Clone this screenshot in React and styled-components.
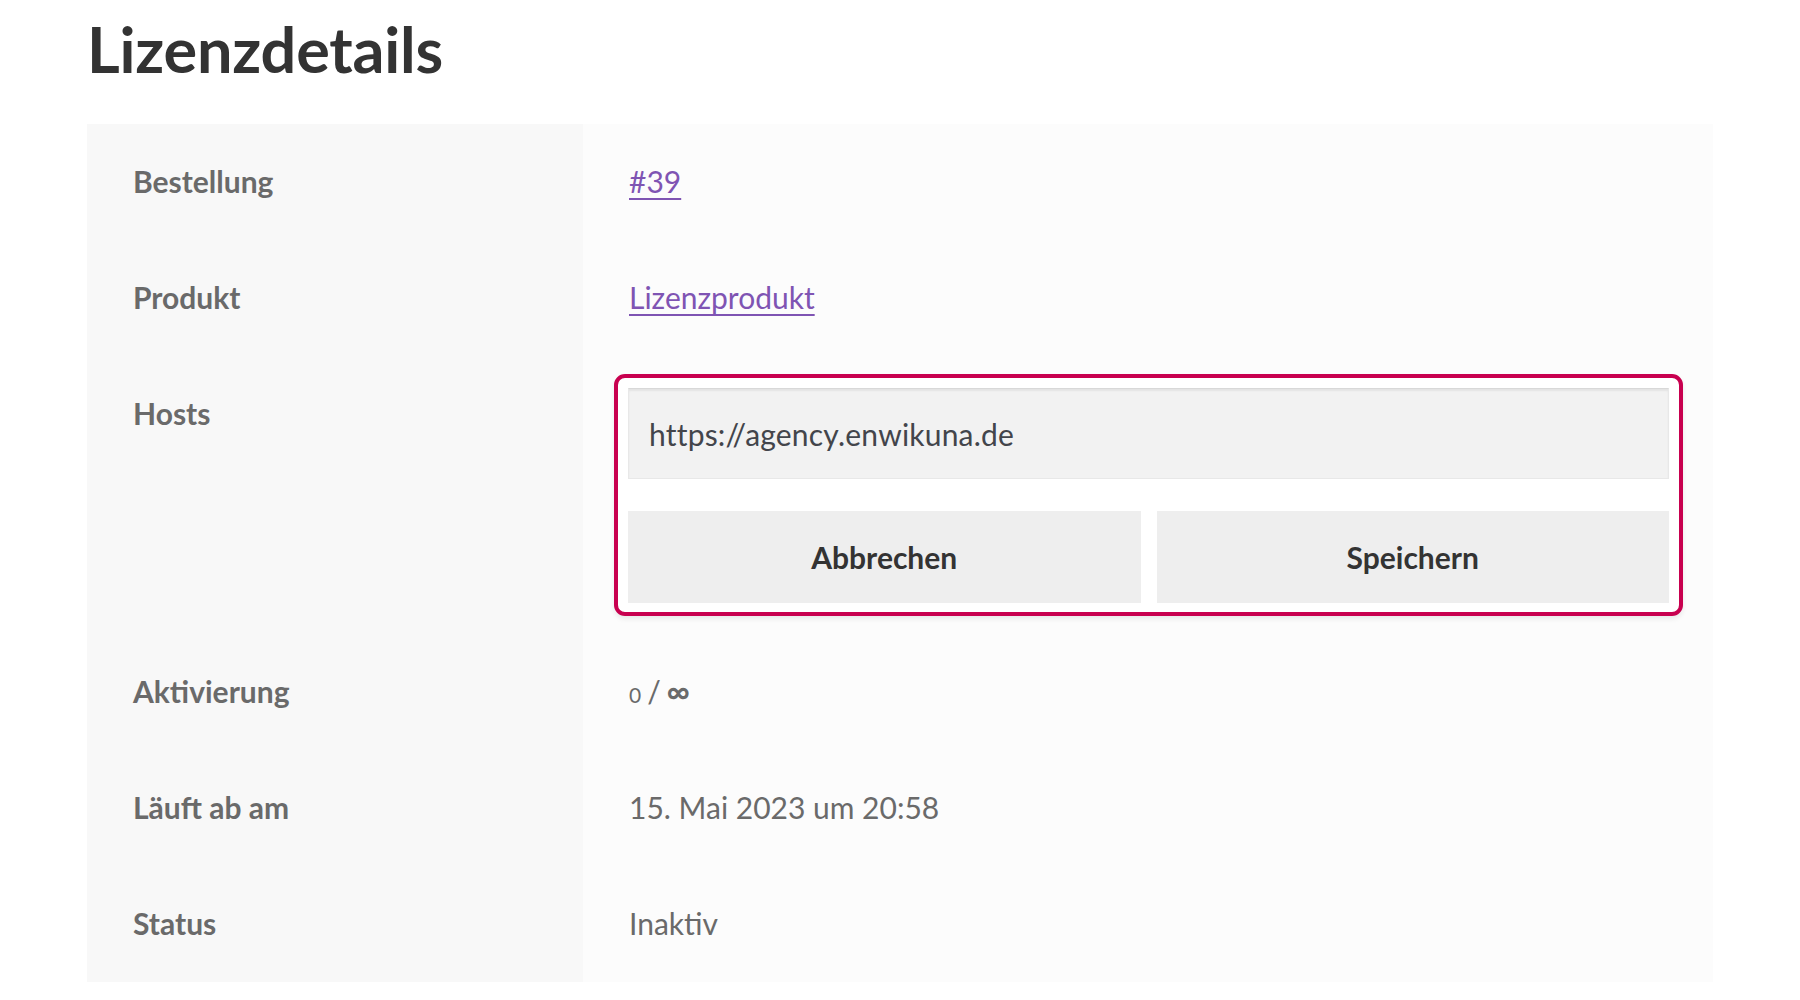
import React from "react";
import styled, { createGlobalStyle } from "styled-components";

const GlobalStyle = createGlobalStyle`
  html, body {
    margin: 0;
    padding: 0;
    background: #ffffff;
    font-family: "Lato", "Open Sans", sans-serif;
  }
`;

const Page = styled.div`
  padding: 12px 87px 0;
`;

const Title = styled.h1`
  margin: 0 0 39px;
  font-size: 63px;
  line-height: 73px;
  font-weight: 700;
  color: #333333;
  letter-spacing: -0.2px;
`;

const Table = styled.div`
  display: grid;
  grid-template-columns: 496px 1fr;
`;

const Label = styled.div`
  background: #f8f8f8;
  padding: 30px 46px 30px;
  font-size: 30px;
  line-height: 55px;
  font-weight: 700;
  color: #6a6a6a;
`;

const Value = styled.div`
  background: #fcfcfc;
  padding: ${({ $editing }) => ($editing ? "18px 30px 18px 31px" : "30px 46px 31px")};
  font-size: 30px;
  line-height: 55px;
  color: #6a6a6a;
`;

const Link = styled.a`
  color: #7f54b3;
  text-decoration: underline;
  text-underline-offset: 5px;
  text-decoration-thickness: 2px;
`;

const EditBox = styled.div`
  border: 4px solid #c8004f;
  border-radius: 11px;
  padding: 10px 10px 9px;
  background: #ffffff;
  box-shadow: 0 3px 5px rgba(0, 0, 0, 0.08);
  display: flex;
  flex-direction: column;
  gap: 32px;
`;

const HostInput = styled.input`
  box-sizing: border-box;
  width: 100%;
  height: 91px;
  border: 1px solid #e8e8e8;
  border-top-color: #d8d8d8;
  background: #f2f2f2;
  box-shadow: inset 0 2px 2px rgba(0, 0, 0, 0.06);
  padding: 0 20px;
  font-family: "Lato", "Open Sans", sans-serif;
  font-size: 30px;
  letter-spacing: 0.2px;
  color: #43454b;
  outline: none;
`;

const ButtonRow = styled.div`
  display: grid;
  grid-template-columns: 1fr 1fr;
  gap: 16px;
`;

const Button = styled.button`
  height: 92px;
  border: none;
  background: #eeeeee;
  font-family: "Lato", "Open Sans", sans-serif;
  font-size: 30px;
  font-weight: 700;
  color: #333333;
  cursor: pointer;
`;

const Count = styled.span`
  font-size: 21px;
  line-height: 1;
`;

const Slash = styled.span`
  margin: 0 6px;
  line-height: 1;
`;

const Infinity = styled.span`
  font-weight: 700;
  font-size: 32px;
  line-height: 1;
`;

const rows = [
  { label: "Bestellung", value: <Link href="#">#39</Link> },
  { label: "Produkt", value: <Link href="#">Lizenzprodukt</Link> },
  { label: "Hosts", editing: true },
  {
    label: "Aktivierung",
    value: (
      <>
        <Count>0</Count>
        <Slash>/</Slash>
        <Infinity>∞</Infinity>
      </>
    ),
  },
  { label: "Läuft ab am", value: "15. Mai 2023 um 20:58" },
  { label: "Status", value: "Inaktiv" },
];

export default function App() {
  return (
    <>
      <GlobalStyle />
      <Page>
        <Title>Lizenzdetails</Title>
        <Table>
          {rows.map((row) => (
            <React.Fragment key={row.label}>
              <Label>{row.label}</Label>
              {row.editing ? (
                <Value $editing>
                  <EditBox>
                    <HostInput defaultValue="https://agency.enwikuna.de" />
                    <ButtonRow>
                      <Button>Abbrechen</Button>
                      <Button>Speichern</Button>
                    </ButtonRow>
                  </EditBox>
                </Value>
              ) : (
                <Value>{row.value}</Value>
              )}
            </React.Fragment>
          ))}
        </Table>
      </Page>
    </>
  );
}
